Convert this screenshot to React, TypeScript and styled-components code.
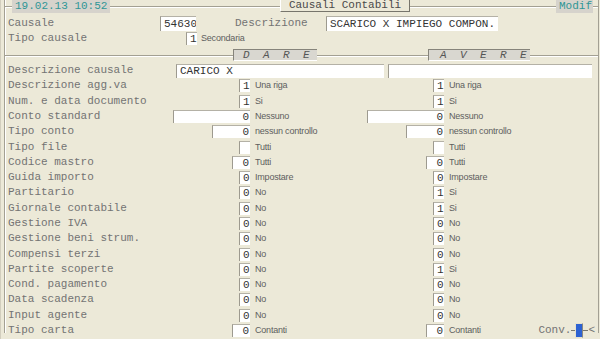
import React from "react";
import styled, { createGlobalStyle } from "styled-components";

const GlobalStyle = createGlobalStyle`
  html, body {
    margin: 0;
    padding: 0;
    background: #ece9d8;
  }
`;

const mono = `"Liberation Mono", "Courier New", monospace`;
const sans = `"Liberation Sans", Arial, sans-serif`;

interface Side {
  v: string;
  w: number;
  d: string;
}

interface Field {
  label: string;
  dare: Side;
  avere: Side;
}

const no = (v = "0"): Side => ({ v, w: 11, d: v === "1" ? "Si" : "No" });

const fields: Field[] = [
  { label: "Descrizione agg.va", dare: { v: "1", w: 11, d: "Una riga" }, avere: { v: "1", w: 11, d: "Una riga" } },
  { label: "Num. e data documento", dare: { v: "1", w: 11, d: "Si" }, avere: { v: "1", w: 11, d: "Si" } },
  { label: "Conto standard", dare: { v: "0", w: 77, d: "Nessuno" }, avere: { v: "0", w: 77, d: "Nessuno" } },
  { label: "Tipo conto", dare: { v: "0", w: 38, d: "nessun controllo" }, avere: { v: "0", w: 38, d: "nessun controllo" } },
  { label: "Tipo file", dare: { v: "", w: 11, d: "Tutti" }, avere: { v: "", w: 11, d: "Tutti" } },
  { label: "Codice mastro", dare: { v: "0", w: 18, d: "Tutti" }, avere: { v: "0", w: 18, d: "Tutti" } },
  { label: "Guida importo", dare: { v: "0", w: 11, d: "Impostare" }, avere: { v: "0", w: 11, d: "Impostare" } },
  { label: "Partitario", dare: no(), avere: no("1") },
  { label: "Giornale contabile", dare: no(), avere: no("1") },
  { label: "Gestione IVA", dare: no(), avere: no() },
  { label: "Gestione beni strum.", dare: no(), avere: no() },
  { label: "Compensi terzi", dare: no(), avere: no() },
  { label: "Partite scoperte", dare: no(), avere: no("1") },
  { label: "Cond. pagamento", dare: no(), avere: no() },
  { label: "Data scadenza", dare: no(), avere: no() },
  { label: "Input agente", dare: no(), avere: no() },
];

const Page = styled.div`
  width: 600px;
  height: 339px;
  overflow: hidden;
  box-sizing: border-box;
  padding: 6px 1px 0 3px;
  border-left: 1px solid #d2cebe;
  background: #ece9d8;
`;

const Frame = styled.div`
  height: 100%;
  border-left: 1px solid #a3a093;
  border-right: 1px solid #a3a093;
  box-shadow: inset 1px 0 #ffffff;
`;

const Header = styled.div`
  display: flex;
  align-items: flex-start;
  height: 13px;
  margin-top: -6px;
`;

const Rule = styled.div<{ $w?: number }>`
  ${(p) => (p.$w ? `width: ${p.$w}px;` : "flex: 1;")}
  height: 0;
  margin-top: 6px;
  border-top: 1px solid #a3a093;
  border-bottom: 1px solid #ffffff;
`;

const StatusBox = styled.div<{ $w: number }>`
  width: ${(p) => p.$w}px;
  height: 13px;
  box-sizing: border-box;
  padding-left: 3px;
  background: #d6d3cc;
  color: #2f9696;
  font: 11px/13px ${mono};
  white-space: nowrap;
`;

const TitleTab = styled.div`
  width: 130px;
  height: 12px;
  box-sizing: border-box;
  border-left: 1px solid #ffffff;
  border-right: 1px solid #77756c;
  border-bottom: 1px solid #77756c;
  color: #4a4a4a;
  font: 11px/11px ${mono};
  text-align: center;
  white-space: nowrap;
`;

const TopBlock = styled.div`
  padding: 3px 0 0 3px;
`;

const TopRow = styled.div`
  display: flex;
  align-items: center;
  height: 15.3px;
`;

const Label = styled.span<{ $w?: number }>`
  ${(p) => (p.$w ? `width: ${p.$w}px; flex: none;` : "")}
  color: #737373;
  font: 11px/13px ${mono};
  white-space: nowrap;
`;

const ValueBox = styled.div<{ $w: number; $h?: number; $left?: boolean }>`
  width: ${(p) => p.$w}px;
  height: ${(p) => p.$h ?? 13}px;
  flex: none;
  box-sizing: border-box;
  padding: 0 1px 0 3px;
  background: #ffffff;
  border-top: 1px solid #b4b1a6;
  border-left: 1px solid #9d9a8f;
  color: #333;
  font: 11px/${(p) => (p.$h ?? 13) - 1}px ${mono};
  text-align: ${(p) => (p.$left ? "left" : "right")};
  white-space: nowrap;
  overflow: hidden;
`;

const Note = styled.span`
  padding-left: 4px;
  color: #5e5e5e;
  font: 9px/13px ${sans};
  letter-spacing: -0.2px;
  white-space: nowrap;
`;

const SectionBar = styled.div`
  display: flex;
  align-items: flex-start;
  height: 12px;
  margin-top: 2px;
`;

const SideTab = styled.div<{ $w: number; $pad: number }>`
  width: ${(p) => p.$w}px;
  height: 12px;
  box-sizing: border-box;
  padding-left: ${(p) => p.$pad}px;
  background: #d9d7d0;
  border-top: 1px solid #86847b;
  border-left: 1px solid #86847b;
  border-bottom: 1px solid #ffffff;
  color: #555;
  font: italic 11px/11px ${mono};
  letter-spacing: 3.4px;
  white-space: pre;
`;

const Body = styled.div`
  margin-top: 2.3px;
  padding-left: 3px;
`;

const GridRow = styled.div`
  display: grid;
  grid-template-columns: 160px 83px 111px 83px 1fr;
  align-items: center;
  height: 15.3px;
`;

const BoxCell = styled.div`
  display: flex;
  justify-content: flex-end;
  padding-right: 1px;
`;

const NoteCell = styled.div`
  display: flex;
  align-items: center;
  min-width: 0;
`;

const WideRow = styled.div`
  display: flex;
  align-items: center;
  height: 15.3px;
  gap: 4px;
`;

const ConvGroup = styled.div`
  display: flex;
  align-items: center;
  margin-left: auto;
  margin-right: 3px;
`;

const Dash = styled.span<{ $w: number }>`
  width: ${(p) => p.$w}px;
  height: 0;
  border-top: 1px solid #7a7870;
`;

const ConvKey = styled.span`
  width: 8px;
  height: 15px;
  box-sizing: border-box;
  background: #2d62d2;
  border: 1px solid #e6e2cf;
  border-right-color: #8a8880;
`;

const Arrow = styled.span`
  color: #737373;
  font: 11px/13px ${mono};
`;

const SideCells: React.FC<{ side: Side; extra?: React.ReactNode }> = ({ side, extra }) => (
  <>
    <BoxCell>
      <ValueBox $w={side.w}>{side.v}</ValueBox>
    </BoxCell>
    <NoteCell>
      <Note>{side.d}</Note>
      {extra}
    </NoteCell>
  </>
);

const App: React.FC = () => {
  return (
    <Page>
      <GlobalStyle />
      <Frame>
        <Header>
          <Rule $w={7} />
          <StatusBox $w={98}>19.02.13 10:52</StatusBox>
          <Rule $w={170} />
          <TitleTab>Causali Contabili</TitleTab>
          <Rule />
          <StatusBox $w={37}>Modif</StatusBox>
          <Rule $w={5} />
        </Header>

        <TopBlock>
          <TopRow>
            <Label $w={152}>Causale</Label>
            <ValueBox $w={36} $h={15}>54630</ValueBox>
            <Label $w={91} style={{ marginLeft: 39 }}>Descrizione</Label>
            <ValueBox $w={172} $h={15} $left>SCARICO X IMPIEGO COMPON.</ValueBox>
          </TopRow>
          <TopRow>
            <Label $w={178}>Tipo causale</Label>
            <ValueBox $w={11}>1</ValueBox>
            <Note>Secondaria</Note>
          </TopRow>
        </TopBlock>

        <SectionBar>
          <Rule $w={228} />
          <SideTab $w={84} $pad={9}>D A R E</SideTab>
          <Rule $w={111} />
          <SideTab $w={102} $pad={11}>A V E R E</SideTab>
          <Rule />
        </SectionBar>

        <Body>
          <WideRow>
            <Label $w={164}>Descrizione causale</Label>
            <ValueBox $w={208} $h={14} $left>CARICO X</ValueBox>
            <ValueBox $w={204} $h={14} $left></ValueBox>
          </WideRow>
          {fields.map((f) => (
            <GridRow key={f.label}>
              <Label>{f.label}</Label>
              <SideCells side={f.dare} />
              <SideCells side={f.avere} />
            </GridRow>
          ))}
          <GridRow>
            <Label>Tipo carta</Label>
            <SideCells side={{ v: "0", w: 18, d: "Contanti" }} />
            <SideCells
              side={{ v: "0", w: 18, d: "Contanti" }}
              extra={
                <ConvGroup>
                  <Label>Conv.</Label>
                  <Dash $w={4} />
                  <ConvKey />
                  <Dash $w={5} />
                  <Arrow>&lt;</Arrow>
                </ConvGroup>
              }
            />
          </GridRow>
        </Body>
      </Frame>
    </Page>
  );
};

export default App;
